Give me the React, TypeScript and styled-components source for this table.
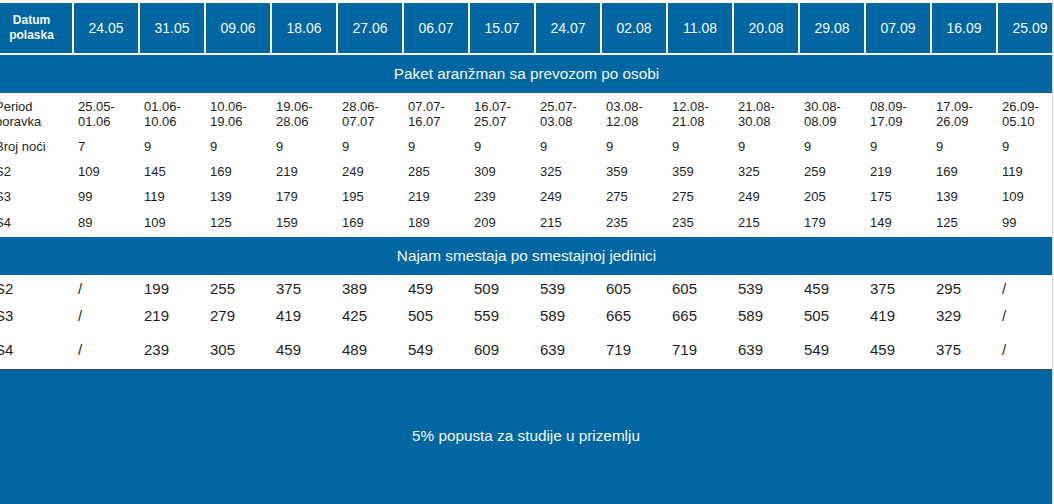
import React from 'react';
import styled, { createGlobalStyle } from 'styled-components';

const BLUE = '#0166a2';

const GlobalStyle = createGlobalStyle`
  html, body {
    margin: 0;
    padding: 0;
    background: #fff;
    font-family: "Liberation Sans", Arial, sans-serif;
  }
`;

const Page = styled.div`
  width: 1053px;
  height: 504px;
  overflow: hidden;
  border-right: 1px solid #d9d9d9;
  padding-top: 1px;
  box-sizing: border-box;
`;

const Table = styled.table`
  margin-left: -11px;
  border-collapse: separate;
  border-spacing: 2px;
  table-layout: fixed;
  width: ${81 + 15 * 64 + 17 * 2}px;
`;

const HeadCell = styled.th<{ $label?: boolean }>`
  background: ${BLUE};
  color: #f4f7fa;
  height: 50px;
  padding: 0 2px;
  text-align: center;
  vertical-align: middle;
  font-size: ${(p) => (p.$label ? '12px' : '14px')};
  font-weight: ${(p) => (p.$label ? 700 : 400)};
  line-height: 15px;
`;

const Band = styled.td`
  background: ${BLUE};
  color: #f4f7fa;
  height: 38px;
  padding: 0;
  text-align: center;
  vertical-align: middle;
  font-size: 15.3px;
  font-weight: 400;
`;

const Cell = styled.td<{ $size: number; $h: number }>`
  color: #1e1e1e;
  height: ${(p) => p.$h}px;
  padding: 0 4px;
  text-align: left;
  vertical-align: middle;
  font-size: ${(p) => p.$size}px;
  line-height: 15px;
  white-space: nowrap;
`;

const Note = styled.div`
  height: 135px;
  box-sizing: border-box;
  padding-bottom: 3px;
  background: ${BLUE};
  border-top: 1px solid #4a4a4a;
  color: #f4f7fa;
  font-size: 15.3px;
  display: flex;
  align-items: center;
  justify-content: center;
`;

const dates = ['24.05', '31.05', '09.06', '18.06', '27.06', '06.07', '15.07', '24.07', '02.08', '11.08', '20.08', '29.08', '07.09', '16.09', '25.09'];

const periods = [
  ['25.05-', '01.06'], ['01.06-', '10.06'], ['10.06-', '19.06'], ['19.06-', '28.06'],
  ['28.06-', '07.07'], ['07.07-', '16.07'], ['16.07-', '25.07'], ['25.07-', '03.08'],
  ['03.08-', '12.08'], ['12.08-', '21.08'], ['21.08-', '30.08'], ['30.08-', '08.09'],
  ['08.09-', '17.09'], ['17.09-', '26.09'], ['26.09-', '05.10'],
];

const packageRows = [
  { label: 'Broj noći', h: 23, values: ['7', '9', '9', '9', '9', '9', '9', '9', '9', '9', '9', '9', '9', '9', '9'] },
  { label: 'S2', h: 23, values: ['109', '145', '169', '219', '249', '285', '309', '325', '359', '359', '325', '259', '219', '169', '119'] },
  { label: 'S3', h: 23, values: ['99', '119', '139', '179', '195', '219', '239', '249', '275', '275', '249', '205', '175', '139', '109'] },
  { label: 'S4', h: 25, values: ['89', '109', '125', '159', '169', '189', '209', '215', '235', '235', '215', '179', '149', '125', '99'] },
];

const rentRows = [
  { label: 'S2', h: 22, values: ['/', '199', '255', '375', '389', '459', '509', '539', '605', '605', '539', '459', '375', '295', '/'] },
  { label: 'S3', h: 28, values: ['/', '219', '279', '419', '425', '505', '559', '589', '665', '665', '589', '505', '419', '329', '/'] },
  { label: 'S4', h: 36, values: ['/', '239', '305', '459', '489', '549', '609', '639', '719', '719', '639', '549', '459', '375', '/'] },
];

export default function App() {
  return (
    <Page>
      <GlobalStyle />
      <Table>
        <colgroup>
          <col style={{ width: 81 }} />
          {dates.map((d) => (
            <col key={d} style={{ width: 64 }} />
          ))}
        </colgroup>
        <thead>
          <tr>
            <HeadCell $label>
              Datum
              <br />
              polaska
            </HeadCell>
            {dates.map((d) => (
              <HeadCell key={d}>{d}</HeadCell>
            ))}
          </tr>
        </thead>
        <tbody>
          <tr>
            <Band colSpan={16}>Paket aranžman sa prevozom po osobi</Band>
          </tr>
          <tr>
            <Cell $size={13} $h={38}>
              Period
              <br />
              boravka
            </Cell>
            {periods.map(([from, to]) => (
              <Cell key={from} $size={13} $h={38}>
                {from}
                <br />
                {to}
              </Cell>
            ))}
          </tr>
          {packageRows.map((row) => (
            <tr key={row.label}>
              <Cell $size={13} $h={row.h}>{row.label}</Cell>
              {row.values.map((v, i) => (
                <Cell key={i} $size={13} $h={row.h}>{v}</Cell>
              ))}
            </tr>
          ))}
          <tr>
            <Band colSpan={16}>Najam smestaja po smestajnoj jedinici</Band>
          </tr>
          {rentRows.map((row) => (
            <tr key={row.label}>
              <Cell $size={15} $h={row.h}>{row.label}</Cell>
              {row.values.map((v, i) => (
                <Cell key={i} $size={15} $h={row.h}>{v}</Cell>
              ))}
            </tr>
          ))}
        </tbody>
      </Table>
      <Note>5% popusta za studije u prizemlju</Note>
    </Page>
  );
}
